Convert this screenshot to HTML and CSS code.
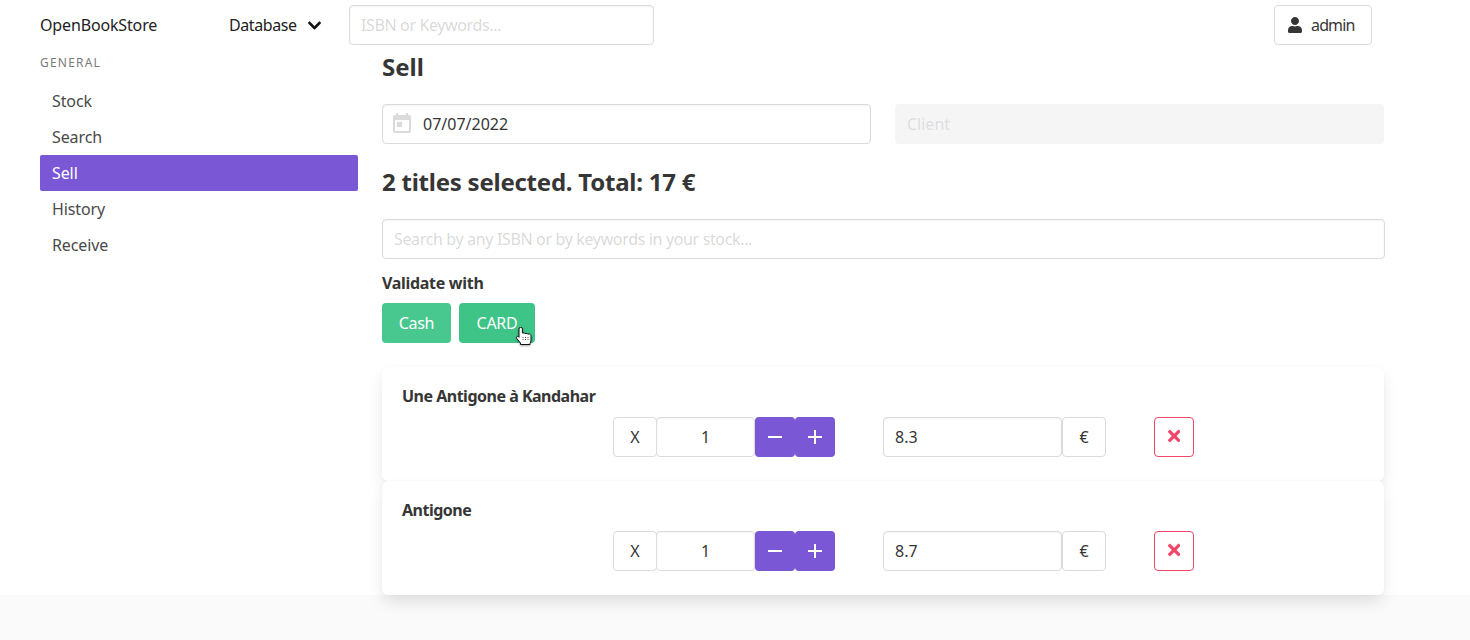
FILE: index.html
```html
<!DOCTYPE html>
<html lang="en">
<head>
<meta charset="utf-8">
<title>OpenBookStore - Sell</title>
<link rel="stylesheet" href="styles.css">
</head>
<body>
<div class="page">
  <nav class="navbar">
    <a class="brand">OpenBookStore</a>
    <a class="nav-dropdown"><span>Database</span>
      <svg class="chevron" viewBox="0 0 448 512"><path d="M207.029 381.476L12.686 187.132c-9.373-9.373-9.373-24.569 0-33.941l22.667-22.667c9.357-9.357 24.522-9.375 33.901-.04L224 284.505l154.745-154.021c9.379-9.335 24.544-9.317 33.901.04l22.667 22.667c9.373 9.373 9.373 24.569 0 33.941L240.971 381.476c-9.373 9.372-24.569 9.372-33.942 0z"/></svg>
    </a>
    <input class="input nav-search" placeholder="ISBN or Keywords...">
    <button class="btn user-btn">
      <svg class="user-icon" viewBox="0 0 448 512"><path d="M224 256c70.7 0 128-57.3 128-128S294.7 0 224 0 96 57.3 96 128s57.3 128 128 128zm89.6 32h-16.7c-22.2 10.2-46.9 16-72.9 16s-50.6-5.8-72.9-16h-16.7C60.2 288 0 348.2 0 422.4V464c0 26.5 21.5 48 48 48h352c26.5 0 48-21.5 48-48v-41.6c0-74.2-60.2-134.4-134.4-134.4z"/></svg>
      <span>admin</span>
    </button>
  </nav>
  <div class="layout">
    <aside class="sidebar">
      <p class="menu-label">GENERAL</p>
      <ul class="menu-list">
        <li><a>Stock</a></li>
        <li><a>Search</a></li>
        <li><a class="active">Sell</a></li>
        <li><a>History</a></li>
        <li><a>Receive</a></li>
      </ul>
    </aside>
    <main class="content">
      <h1 class="title">Sell</h1>
      <div class="sell-fields">
        <div class="date-field">
          <svg class="cal-icon" viewBox="0 0 24 24"><path d="M7,10H12V15H7M19,19H5V8H19M19,3H18V1H16V3H8V1H6V3H5C3.89,3 3,3.9 3,5V19A2,2 0 0,0 5,21H19A2,2 0 0,0 21,19V5A2,2 0 0,0 19,3Z"/></svg>
          <input class="input date-input" value="07/07/2022">
        </div>
        <input class="input client-input" placeholder="Client" disabled>
      </div>
      <h2 class="total">2 titles selected. Total: 17 €</h2>
      <input class="input stock-search" placeholder="Search by any ISBN or by keywords in your stock...">
      <p class="validate-label">Validate with</p>
      <div class="validate-btns">
        <button class="btn success">Cash</button>
        <button class="btn success hovered">CARD
          <svg class="cursor" viewBox="0 0 16 18"><path d="M3 2a1.700 1.700 0 0 1 3.400 0v4h2l.5.5h2l.5.5h2c1 .2 1.600.8 1.600 1.800V13c0 1.500-.5 2.300-1 3.500v1H4.500V16L.8 11.500c-.5-.7-.4-1.700.4-2 .6-.2 1.200 0 1.800.8z" fill="#fff" stroke="#111" stroke-width="1"/><path d="M7 10v4M9.500 10v4M12 10v4" stroke="#555" stroke-width="1" stroke-dasharray="1 1"/></svg>
        </button>
      </div>
      <section class="card">
        <p class="book-title">Une Antigone à Kandahar</p>
        <div class="controls">
          <span class="addon x">X</span>
          <input class="input qty" value="1">
          <button class="step"><svg viewBox="0 0 24 24"><path d="M19,13H5V11H19V13Z"/></svg></button>
          <button class="step"><svg viewBox="0 0 24 24"><path d="M19,13H13V19H11V13H5V11H11V5H13V11H19V13Z"/></svg></button>
          <input class="input price" value="8.3">
          <span class="addon euro">€</span>
          <button class="remove"><svg viewBox="0 0 352 512"><path d="M242.72 256l100.07-100.07c12.28-12.28 12.28-32.19 0-44.48l-22.24-22.24c-12.28-12.28-32.19-12.28-44.48 0L176 189.28 75.93 89.21c-12.28-12.28-32.19-12.28-44.48 0L9.21 111.45c-12.28 12.28-12.28 32.19 0 44.48L109.28 256 9.21 356.07c-12.28 12.28-12.28 32.19 0 44.48l22.24 22.24c12.28 12.28 32.2 12.28 44.48 0L176 322.72l100.07 100.07c12.28 12.28 32.2 12.28 44.48 0l22.24-22.24c12.28-12.28 12.28-32.19 0-44.48L242.72 256z"/></svg></button>
        </div>
      </section>
      <section class="card">
        <p class="book-title">Antigone</p>
        <div class="controls">
          <span class="addon x">X</span>
          <input class="input qty" value="1">
          <button class="step"><svg viewBox="0 0 24 24"><path d="M19,13H5V11H19V13Z"/></svg></button>
          <button class="step"><svg viewBox="0 0 24 24"><path d="M19,13H13V19H11V13H5V11H11V5H13V11H19V13Z"/></svg></button>
          <input class="input price" value="8.7">
          <span class="addon euro">€</span>
          <button class="remove"><svg viewBox="0 0 352 512"><path d="M242.72 256l100.07-100.07c12.28-12.28 12.28-32.19 0-44.48l-22.24-22.24c-12.28-12.28-32.19-12.28-44.48 0L176 189.28 75.93 89.21c-12.28-12.28-32.19-12.28-44.48 0L9.21 111.45c-12.28 12.28-12.28 32.19 0 44.48L109.28 256 9.21 356.07c-12.28 12.28-12.28 32.19 0 44.48l22.24 22.24c12.28 12.28 32.2 12.28 44.48 0L176 322.72l100.07 100.07c12.28 12.28 32.2 12.28 44.48 0l22.24-22.24c12.28-12.28 12.28-32.19 0-44.48L242.72 256z"/></svg></button>
        </div>
      </section>
    </main>
  </div>
</div>
</body>
</html>
```
FILE: styles.css
```css
* { box-sizing: border-box; }
html { background: #fafafa; height: 100%; }
body {
  margin: 0;
  min-height: 640px;
  font-family: "Noto Sans", "Open Sans", sans-serif;
  font-size: 16px;
  color: #363636;
}
p, h1, h2, ul { margin: 0; padding: 0; }
ul { list-style: none; }
.page { background: #fff; height: 595px; }
.input {
  font: inherit;
  height: 40px;
  color: #363636;
  background: #fff;
  border: 1px solid #dbdbdb;
  border-radius: 4px;
  padding: 0 11px;
  box-shadow: inset 0 1px 2px rgba(10, 10, 10, .05);
  outline: none;
}
.input::placeholder { color: rgba(54, 54, 54, .2); }
.btn {
  font: inherit;
  height: 40px;
  border: 1px solid #dbdbdb;
  border-radius: 4px;
  background: #fff;
  color: #363636;
  padding: 0;
}
.navbar { display: flex; align-items: center; height: 50px; padding-left: 40px; color: #222; }
.brand { width: 189px; letter-spacing: -.15px; }
.nav-dropdown { display: flex; align-items: center; width: 120px; letter-spacing: -.4px; }
.chevron { width: 13px; height: 15px; margin-left: 11px; fill: #111; stroke: #111; stroke-width: 16px; }
.nav-search { width: 305px; letter-spacing: -.37px; }
.user-btn { display: flex; align-items: center; width: 98px; margin-left: 620px; padding-left: 13px; letter-spacing: -.85px; }
.user-icon { width: 14px; height: 16px; margin-right: 9px; fill: #363636; }
.layout { display: flex; padding-left: 40px; }
.sidebar { width: 318px; }
.menu-label { font-size: 12px; letter-spacing: .1em; color: #7a7a7a; line-height: 18px; margin: 4px 0 11px; }
.menu-list a { display: block; height: 36px; line-height: 36px; padding-left: 12px; border-radius: 2px; color: #4a4a4a; letter-spacing: -.1px; }
.menu-list a.active { background: #7957d5; color: #fff; }
.content { width: 1003px; margin-left: 24px; }
.title { font-size: 24px; font-weight: 700; line-height: 34px; }
.sell-fields { display: flex; margin-top: 20px; }
.date-field { display: flex; position: relative; width: 489px; }
.cal-icon { position: absolute; left: 8px; top: 8px; width: 24px; height: 24px; fill: #dbdbdb; }
.date-input { width: 100%; padding-left: 40px; }
.client-input { width: 489px; margin-left: 24px; background: #f5f5f5; border-color: #f5f5f5; box-shadow: none; }
.client-input::placeholder { color: rgba(122, 122, 122, .2); }
.total { font-size: 24px; font-weight: 700; line-height: 34px; margin-top: 21px; letter-spacing: -.24px; }
.stock-search { display: block; width: 100%; margin-top: 20px; letter-spacing: -.35px; }
.validate-label { font-weight: 700; line-height: 24px; margin-top: 12px; letter-spacing: -.3px; }
.validate-btns { display: flex; gap: 8px; margin-top: 8px; }
.success { background: #48c78e; border-color: transparent; color: #fff; width: 69px; letter-spacing: -.3px; }
.hovered { background: #3ec487; width: 76px; position: relative; }
.cursor { position: absolute; left: 56px; top: 23px; width: 16px; height: 18px; filter: drop-shadow(0 1px 1px rgba(0, 0, 0, .35)); }
.card {
  height: 114px;
  margin-right: 1px;
  padding: 18px 20px 0;
  border-radius: 6px;
  background: #fff;
  box-shadow: 0 8px 16px -2px rgba(10, 10, 10, .12), 0 0 2px rgba(10, 10, 10, .04);
}
.validate-btns + .card { margin-top: 24px; }
.book-title { font-weight: 700; line-height: 22px; letter-spacing: -.5px; }
.controls { display: flex; margin-top: 10px; margin-left: 211px; }
.addon { display: flex; align-items: center; justify-content: center; height: 40px; width: 44px; border: 1px solid #dbdbdb; border-radius: 4px; }
.qty { width: 99px; margin-left: -1px; text-align: center; }
.step { display: flex; align-items: center; justify-content: center; width: 40px; height: 40px; padding: 0; border: 0; border-radius: 4px; background: #7957d5; }
.step svg { width: 24px; height: 24px; fill: #fff; }
.price { width: 179px; margin-left: 48px; }
.remove { display: flex; align-items: center; justify-content: center; width: 40px; height: 40px; margin-left: 48px; padding: 0 0 2px; background: #fff; border: 1px solid #f14668; border-radius: 4px; }
.remove svg { width: 12.400px; height: 18px; fill: #f14668; }
```
